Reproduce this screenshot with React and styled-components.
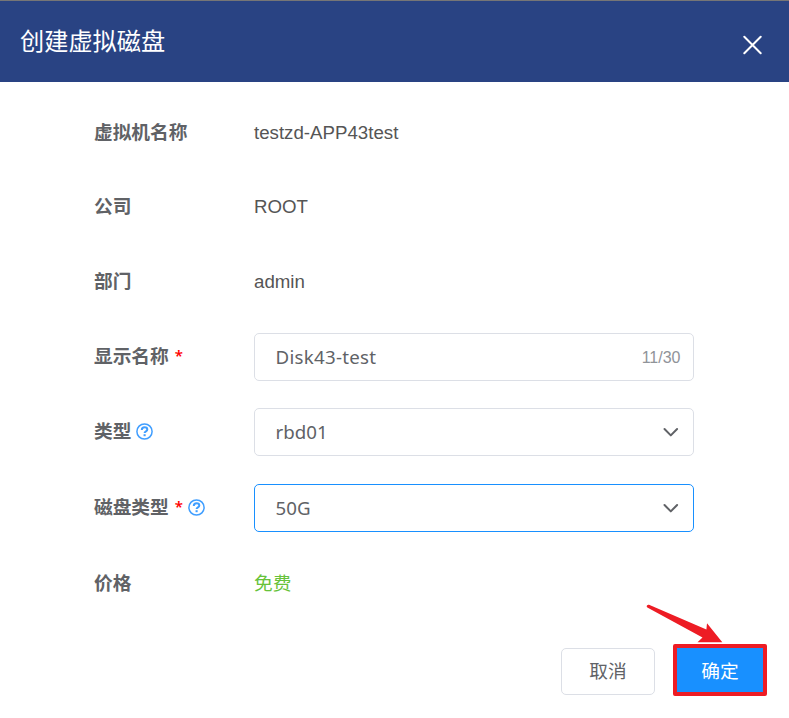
import React from "react";
import styled, { createGlobalStyle } from "styled-components";

const GlobalStyle = createGlobalStyle`
  *, *::before, *::after { box-sizing: border-box; }
  body {
    margin: 0;
    background: #fff;
    font-family: "Liberation Sans", "Noto Sans CJK SC", sans-serif;
    font-size: 18.7px;
    color: #606266;
  }
  button, input { font: inherit; color: inherit; }
`;

const Dialog = styled.div`
  width: 789px;
  height: 718px;
  display: flex;
  flex-direction: column;
  overflow: hidden;
  background: #fff;
`;

const Header = styled.header`
  height: 82px;
  flex: none;
  display: flex;
  align-items: center;
  justify-content: space-between;
  padding: 6px 27px 0 20px;
  border-top: 1px solid #767676;
  background: #294383;
`;

const Title = styled.h1`
  margin: -6px 0 0;
  font-size: 24.2px;
  line-height: 36px;
  font-weight: 400;
  color: #fff;
`;

const CloseButton = styled.button`
  display: flex;
  padding: 0;
  border: 0;
  background: none;
  color: #fff;
`;

const Form = styled.form`
  display: grid;
  grid-template-rows: 74px 75px 75px 75px 76px 76px 48px;
  padding: 27px 95px 0 94px;
`;

const Field = styled.div`
  height: 48px;
  display: grid;
  grid-template-columns: 160px 440px;
  align-items: center;
`;

const Label = styled.label`
  display: flex;
  align-items: center;
  height: 48px;
  font-weight: 700;
  line-height: 48px;
  white-space: nowrap;
`;

const Required = styled.span`
  width: 7px;
  margin-left: 6px;
  padding-bottom: 5px;
  color: #f00;
  font-family: "Noto Sans", sans-serif;
  font-size: 15px;
  font-weight: 600;
`;

const HelpMark = styled.svg`
  flex: none;
  margin: 0 0 1px ${(p) => (p.$afterMark ? "6px" : "4.5px")};
`;

const Value = styled.span`
  color: ${(p) => (p.$free ? "#67c23a" : "#555")};
  line-height: 48px;
`;

const Control = styled.div`
  width: 440px;
  height: 48px;
  display: flex;
  align-items: center;
  padding: 0 12.5px 0 20.5px;
  border: 1px solid ${(p) => (p.$active ? "#1890ff" : "#dcdfe6")};
  border-radius: 5px;
  font-family: "Noto Sans", "Noto Sans CJK SC", sans-serif;
`;

const TextInput = styled.input`
  flex: 1;
  min-width: 0;
  padding: 0 0 2px;
  border: 0;
  outline: 0;
  background: none;
  letter-spacing: 0.28px;
`;

const Selected = styled.span`
  flex: 1;
  padding-bottom: 2px;
`;

const Counter = styled.span`
  padding-top: 2px;
  font-family: "Liberation Sans", sans-serif;
  font-size: 16px;
  color: #909399;
`;

const Footer = styled.footer`
  display: flex;
  justify-content: flex-end;
  align-items: flex-start;
  gap: 18px;
  padding: 36px 22px 0 0;
`;

const CancelButton = styled.button`
  width: 94px;
  height: 47px;
  margin-top: 4px;
  padding: 0 0 4px;
  border: 1px solid #dcdfe6;
  border-radius: 5px;
  background: #fff;
`;

const ConfirmButton = styled.button`
  position: relative;
  width: 94px;
  height: 52px;
  padding: 0 0 2px;
  border: 4px solid #ed1c24;
  border-radius: 2px;
  background: #1890ff;
  color: #fff;
`;

const Arrow = styled.svg`
  position: absolute;
  left: -31px;
  top: -44px;
  pointer-events: none;
`;

function Help({ afterMark }) {
  return (
    <HelpMark $afterMark={afterMark} width="17" height="17" viewBox="0 0 17 17" fill="none" stroke="#409eff">
      <circle cx="8.5" cy="8.5" r="7.6" strokeWidth="1.5" />
      <path d="M5.8 6.9C5.8 5.1 6.9 4.3 8.6 4.3s2.7.8 2.7 2.2c0 1.9-2.7 1.7-2.7 3.6" strokeWidth="2" />
      <path d="M8.6 11.2v2" strokeWidth="2.1" />
    </HelpMark>
  );
}

function Chevron() {
  return (
    <svg width="20" height="20" viewBox="0 0 20 20" fill="none" stroke="#606266" strokeWidth="2" strokeLinecap="round" strokeLinejoin="round">
      <path d="m3.5 7 6.3 6.4L16.1 7" />
    </svg>
  );
}

function FormRow({ label, required, help, children }) {
  return (
    <Field>
      <Label>
        <span>{label}</span>
        {required && <Required>*</Required>}
        {help && <Help afterMark={required} />}
      </Label>
      {children}
    </Field>
  );
}

export default function App() {
  return (
    <>
      <GlobalStyle />
      <Dialog role="dialog">
        <Header>
          <Title>创建虚拟磁盘</Title>
          <CloseButton aria-label="关闭">
            <svg width="20" height="20" viewBox="0 0 20 20" fill="none" stroke="currentColor" strokeWidth="2" strokeLinecap="round">
              <path d="m2.3 1.8 16.4 16.4M18.7 1.8 2.3 18.2" />
            </svg>
          </CloseButton>
        </Header>
        <Form>
          <FormRow label="虚拟机名称"><Value>testzd-APP43test</Value></FormRow>
          <FormRow label="公司"><Value>ROOT</Value></FormRow>
          <FormRow label="部门"><Value>admin</Value></FormRow>
          <FormRow label="显示名称" required>
            <Control>
              <TextInput defaultValue="Disk43-test" />
              <Counter>11/30</Counter>
            </Control>
          </FormRow>
          <FormRow label="类型" help>
            <Control><Selected>rbd01</Selected><Chevron /></Control>
          </FormRow>
          <FormRow label="磁盘类型" required help>
            <Control $active><Selected>50G</Selected><Chevron /></Control>
          </FormRow>
          <FormRow label="价格"><Value $free>免费</Value></FormRow>
        </Form>
        <Footer>
          <CancelButton>取消</CancelButton>
          <ConfirmButton>
            确定
            <Arrow width="80" height="42" viewBox="0 0 80 42" fill="#ed1c24">
              <path d="M1.2 1.2C.2 2 .7 3.2 1.8 3.7L56.5 33.5l-5 4.8H76.3L61 19.2l-.6 6.2L3 .8C2.3.5 1.7.7 1.2 1.2Z" />
            </Arrow>
          </ConfirmButton>
        </Footer>
      </Dialog>
    </>
  );
}
